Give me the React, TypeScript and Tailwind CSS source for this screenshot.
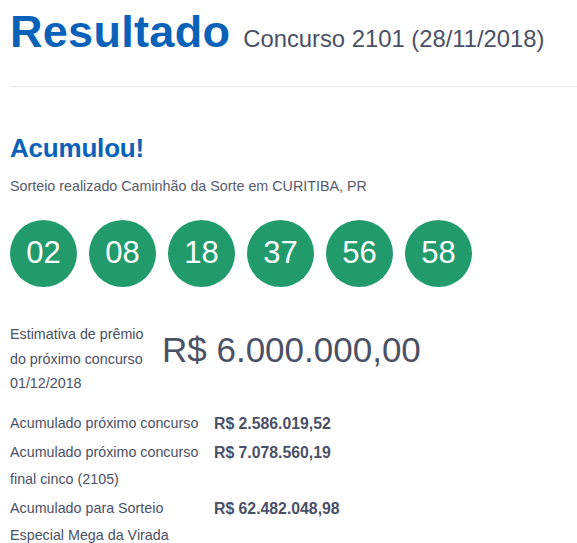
export default function App() {
  const numbers = ["02", "08", "18", "37", "56", "58"]
  const rows = [
    { label: ["Acumulado próximo concurso"], value: "R$ 2.586.019,52" },
    { label: ["Acumulado próximo concurso", "final cinco (2105)"], value: "R$ 7.078.560,19" },
    { label: ["Acumulado para Sorteio", "Especial Mega da Virada"], value: "R$ 62.482.048,98" },
  ]

  return (
    <div className="min-h-[543px] bg-white pl-[10px] font-['Liberation_Sans',Arial,sans-serif] text-[#4a5066]">
      {/* Cabeçalho */}
      <div className="flex items-baseline gap-[13px] pt-[6px]">
        <h1 className="text-[45px] leading-[52px] font-bold tracking-[0.3px] text-[#0a62b8]">Resultado</h1>
        <span className="text-[23.8px] leading-[30px] text-[#4a5066]">Concurso 2101 (28/11/2018)</span>
      </div>
      <hr className="mt-[28px] border-t border-[#e6e6e6]" />

      {/* Resultado */}
      <h2 className="mt-[46px] text-[26px] leading-[30px] font-bold tracking-[-0.2px] text-[#0a62b8]">Acumulou!</h2>
      <p className="mt-[14px] text-[14.3px] leading-[19px] text-[#555a6e]">
        Sorteio realizado Caminhão da Sorte em CURITIBA, PR
      </p>

      <ul className="mt-[24px] flex gap-[12px]">
        {numbers.map((n) => (
          <li
            key={n}
            className="flex h-[67px] w-[67px] items-center justify-center rounded-full bg-[#219a6c] text-[31px] text-white"
          >
            {n}
          </li>
        ))}
      </ul>

      {/* Estimativa */}
      <div className="mt-[35px] flex items-center gap-[12px]">
        <div className="w-[140px] whitespace-nowrap text-[14.3px] leading-[24.5px]">
          <div>Estimativa de prêmio</div>
          <div>do próximo concurso</div>
          <div>01/12/2018</div>
        </div>
        <div className="pb-[17px] text-[35px] leading-[40px]">R$ 6.000.000,00</div>
      </div>

      {/* Acumulados */}
      <div className="mt-[14px] flex flex-col gap-[2px]">
        {rows.map((r) => (
          <div key={r.value} className="flex text-[14.3px] leading-[27px]">
            <div className="w-[204px] whitespace-nowrap">
              {r.label.map((l) => (
                <div key={l}>{l}</div>
              ))}
            </div>
            <div className="text-[15.8px] font-bold">{r.value}</div>
          </div>
        ))}
      </div>
    </div>
  )
}
